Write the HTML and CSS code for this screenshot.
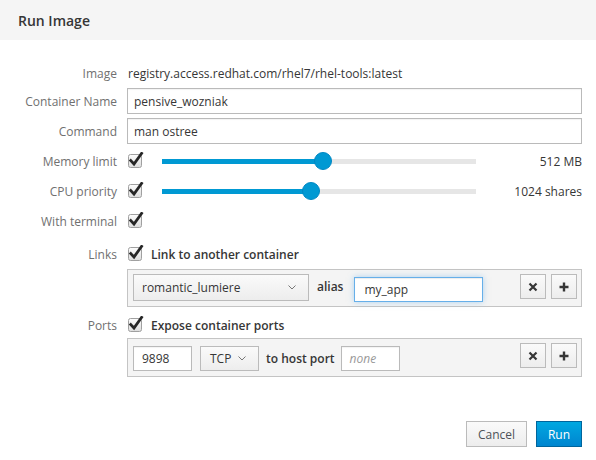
FILE: index.html
```html
<!DOCTYPE html>
<html>
<head>
<meta charset="utf-8">
<link rel="stylesheet" href="styles.css">
</head>
<body>
<div class="modal">
  <div class="header"><h4 class="title">Run Image</h4></div>
  <div class="body">
    <div class="row r-image">
      <div class="lbl">Image</div>
      <div class="ctl value">registry.access.redhat.com/rhel7/rhel-tools:latest</div>
    </div>
    <div class="row r-input">
      <div class="lbl">Container Name</div>
      <div class="ctl"><div class="input">pensive_wozniak</div></div>
    </div>
    <div class="row r-input">
      <div class="lbl">Command</div>
      <div class="ctl"><div class="input">man ostree</div></div>
    </div>
    <div class="row r-check">
      <div class="lbl">Memory limit</div>
      <div class="ctl">
        <span class="cb"><svg width="16" height="16" viewBox="0 0 16 16"><defs><linearGradient id="g1" x1="0" y1="0" x2="0" y2="1"><stop offset="0" stop-color="#fdfdfd"/><stop offset="1" stop-color="#dcdcdc"/></linearGradient></defs><rect x="0.5" y="2.5" width="13" height="13" rx="2" fill="url(#g1)" stroke="#a0a0a0"/><path d="M2.8 8.6 L6 12 L13.6 1.4" fill="none" stroke="#262626" stroke-width="2.8" stroke-linecap="square"/></svg></span>
        <div class="slider"><div class="fill" style="width:51.3%"></div><div class="knob" style="left:51.3%"></div></div>
        <div class="sval">512 MB</div>
      </div>
    </div>
    <div class="row r-check">
      <div class="lbl">CPU priority</div>
      <div class="ctl">
        <span class="cb"><svg width="16" height="16" viewBox="0 0 16 16"><rect x="0.5" y="2.5" width="13" height="13" rx="2" fill="url(#g1)" stroke="#a0a0a0"/><path d="M2.8 8.6 L6 12 L13.6 1.4" fill="none" stroke="#262626" stroke-width="2.8" stroke-linecap="square"/></svg></span>
        <div class="slider"><div class="fill" style="width:47.4%"></div><div class="knob" style="left:47.4%"></div></div>
        <div class="sval">1024 shares</div>
      </div>
    </div>
    <div class="row r-check">
      <div class="lbl">With terminal</div>
      <div class="ctl">
        <span class="cb"><svg width="16" height="16" viewBox="0 0 16 16"><rect x="0.5" y="2.5" width="13" height="13" rx="2" fill="url(#g1)" stroke="#a0a0a0"/><path d="M2.8 8.6 L6 12 L13.6 1.4" fill="none" stroke="#262626" stroke-width="2.8" stroke-linecap="square"/></svg></span>
      </div>
    </div>
    <div class="row r-links">
      <div class="lbl">Links</div>
      <div class="ctl">
        <span class="cb"><svg width="16" height="16" viewBox="0 0 16 16"><rect x="0.5" y="2.5" width="13" height="13" rx="2" fill="url(#g1)" stroke="#a0a0a0"/><path d="M2.8 8.6 L6 12 L13.6 1.4" fill="none" stroke="#262626" stroke-width="2.8" stroke-linecap="square"/></svg></span>
        <span class="cblabel">Link to another container</span>
      </div>
    </div>
    <div class="row r-box1">
      <div class="lbl"></div>
      <div class="ctl">
        <div class="box">
          <div class="select sel-link">romantic_lumiere<svg class="chev" width="8" height="5" viewBox="0 0 8 5"><path d="M0.5 0.5 L4 4 L7.5 0.5" fill="none" stroke="#777" stroke-width="1"/></svg></div>
          <span class="txt t-alias">alias</span>
          <div class="input in-alias focus">my_app</div>
          <div class="spacer"></div>
          <div class="btn-sq"><svg width="10" height="10" viewBox="0 0 10 10"><path d="M1.5 1.5 L8.5 8.5 M8.5 1.5 L1.5 8.5" stroke="#363636" stroke-width="2.2"/></svg></div>
          <div class="btn-sq"><svg width="10" height="10" viewBox="0 0 10 10"><path d="M5 0.5 V9.5 M0.5 5 H9.5" stroke="#363636" stroke-width="2.4"/></svg></div>
        </div>
      </div>
    </div>
    <div class="row r-ports">
      <div class="lbl">Ports</div>
      <div class="ctl">
        <span class="cb"><svg width="16" height="16" viewBox="0 0 16 16"><rect x="0.5" y="2.5" width="13" height="13" rx="2" fill="url(#g1)" stroke="#a0a0a0"/><path d="M2.8 8.6 L6 12 L13.6 1.4" fill="none" stroke="#262626" stroke-width="2.8" stroke-linecap="square"/></svg></span>
        <span class="cblabel">Expose container ports</span>
      </div>
    </div>
    <div class="row r-box2">
      <div class="lbl"></div>
      <div class="ctl">
        <div class="box box2">
          <div class="input in-port">9898</div>
          <div class="select sel-tcp">TCP<svg class="chev" width="8" height="5" viewBox="0 0 8 5"><path d="M0.5 0.5 L4 4 L7.5 0.5" fill="none" stroke="#777" stroke-width="1"/></svg></div>
          <span class="txt t-host">to host port</span>
          <div class="input in-port placeholder">none</div>
          <div class="spacer"></div>
          <div class="btn-sq"><svg width="10" height="10" viewBox="0 0 10 10"><path d="M1.5 1.5 L8.5 8.5 M8.5 1.5 L1.5 8.5" stroke="#363636" stroke-width="2.2"/></svg></div>
          <div class="btn-sq"><svg width="10" height="10" viewBox="0 0 10 10"><path d="M5 0.5 V9.5 M0.5 5 H9.5" stroke="#363636" stroke-width="2.4"/></svg></div>
        </div>
      </div>
    </div>
  </div>
  <div class="footer">
    <button class="btn btn-default">Cancel</button>
    <button class="btn btn-primary">Run</button>
  </div>
</div>
</body>
</html>
```

FILE: styles.css
```css
html, body {
  margin: 0;
  padding: 0;
  background: #fff;
}
body {
  font-family: "Open Sans", "Liberation Sans", sans-serif;
  font-size: 12px;
  color: #363636;
  width: 596px;
  height: 460px;
  overflow: hidden;
}
.modal {
  display: flex;
  flex-direction: column;
}
.header {
  height: 40px;
  background: #f5f5f5;
  display: flex;
  align-items: center;
  padding-left: 18px;
}
.title {
  margin: 0;
  font-size: 14px;
  font-weight: 600;
  color: #363636;
}
.body {
  display: flex;
  flex-direction: column;
  padding-top: 22px;
}
.row {
  display: flex;
  align-items: center;
}
.lbl {
  width: 99px;
  margin-left: 18px;
  margin-right: 10px;
  text-align: right;
  color: #707070;
  flex: none;
}
.ctl {
  width: 455px;
  display: flex;
  align-items: center;
  flex: none;
}
.r-image { height: 22px; }
.r-input { height: 26px; margin-top: 4px; }
.r-check { height: 26px; margin-top: 4px; }
.r-links { height: 26px; margin-top: 7px; }
.r-box1 { margin-top: 2px; }
.r-ports { height: 26px; margin-top: 5px; }
.r-box2 { margin-top: 0; }
.value { color: #363636; padding-left: 1px; }
.input {
  box-sizing: border-box;
  height: 26px;
  width: 100%;
  border: 1px solid #bababa;
  background: #fff;
  box-shadow: inset 0 1px 1px rgba(0,0,0,0.05);
  padding: 0 6px;
  display: flex;
  align-items: center;
  font-size: 12px;
  color: #363636;
}
.cb {
  width: 16px;
  height: 16px;
  flex: none;
  margin-left: 1px;
  margin-top: -3px;
}
.cb svg { display: block; }
.slider {
  position: relative;
  width: 314px;
  height: 5px;
  background: #e6e6e6;
  margin-left: 18px;
  flex: none;
}
.fill {
  height: 100%;
  background: #0099d3;
}
.knob {
  position: absolute;
  top: 50%;
  width: 18px;
  height: 18px;
  margin-left: -9px;
  margin-top: -9px;
  border-radius: 50%;
  background: #0099d3;
  box-sizing: border-box;
  border: 1px solid #0088c4;
}
.sval {
  flex: 1;
  text-align: right;
  color: #363636;
}
.cblabel {
  margin-left: 7px;
  font-weight: 600;
  color: #363636;
}
.box {
  box-sizing: border-box;
  width: 455px;
  height: 38px;
  border: 1px solid #c4c4c4;
  background: #f4f4f4;
  display: flex;
  align-items: flex-start;
  padding: 4px 4px 4px 5px;
}
.box2 { height: 39px; }
.select {
  box-sizing: border-box;
  height: 27px;
  border: 1px solid #bbb;
  background: linear-gradient(#fafafa, #ededed);
  display: flex;
  align-items: center;
  justify-content: space-between;
  padding: 0 12px 0 8px;
  color: #363636;
  flex: none;
}
.sel-link { width: 176px; }
.chev { display: block; }
.txt {
  font-weight: 600;
  color: #363636;
  flex: none;
}
.t-alias {
  margin-left: 8px;
  line-height: 25px;
}
.in-alias {
  width: 129px;
  height: 25px;
  margin-left: 11px;
  margin-top: 3px;
  flex: none;
  padding-left: 9px;
}
.focus {
  border-color: #66afe9;
  box-shadow: inset 0 1px 1px rgba(0,0,0,0.075), 0 0 6px rgba(102,175,233,0.5);
}
.spacer { flex: 1; }
.btn-sq {
  box-sizing: border-box;
  width: 26px;
  height: 25px;
  border: 1px solid #bbb;
  background: linear-gradient(#fafafa, #ededed);
  display: flex;
  align-items: center;
  justify-content: center;
  flex: none;
  margin-left: 5px;
}
.btn-sq svg { display: block; }
.in-port {
  width: 59px;
  height: 25px;
  margin-top: 3px;
  flex: none;
  padding-left: 8px;
}
.sel-tcp {
  width: 59px;
  height: 25px;
  margin-top: 3px;
  margin-left: 8px;
  padding: 0 12px 0 9px;
}
.t-host {
  margin-left: 7px;
  margin-top: 3px;
  line-height: 25px;
}
.placeholder {
  margin-left: 6px;
  color: #999;
  font-style: italic;
}
.footer {
  display: flex;
  justify-content: flex-end;
  padding-right: 14px;
  margin-top: 44px;
  gap: 9px;
}
.btn {
  box-sizing: border-box;
  height: 26px;
  font-family: "Open Sans", "Liberation Sans", sans-serif;
  font-size: 12px;
  padding: 0 10px;
  border: 1px solid #bbb;
  margin: 0;
}
.btn-default {
  width: 61px;
  background: linear-gradient(#fafafa, #ededed);
  color: #4d5258;
}
.btn-primary {
  width: 46px;
  background: linear-gradient(#00a8e1, #0085cf);
  border-color: #00659c;
  color: #fff;
}
```
